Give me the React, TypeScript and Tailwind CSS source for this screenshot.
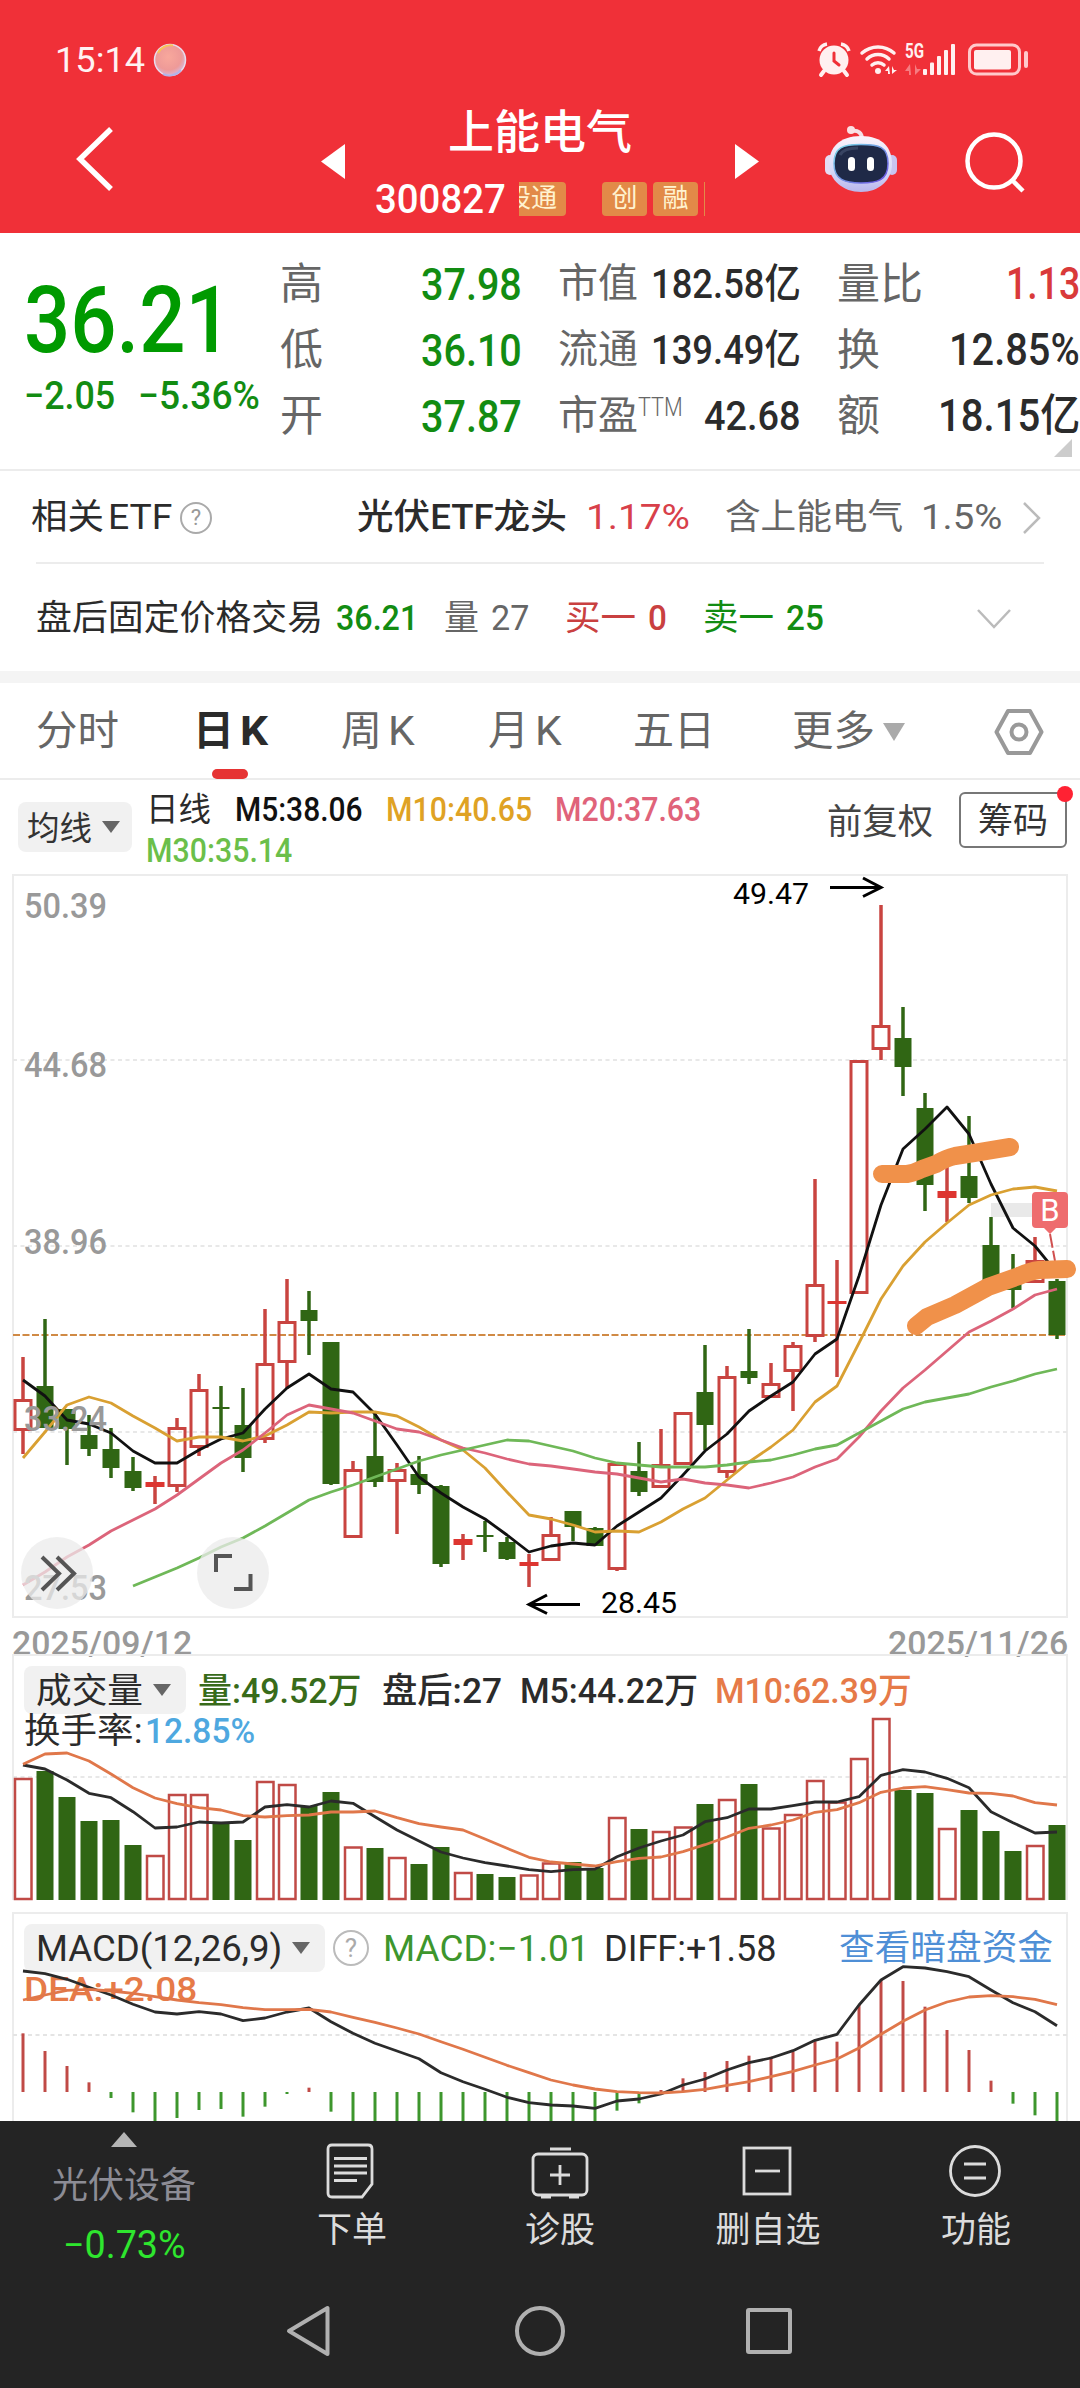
import { useLayoutEffect, useRef, useState } from 'react';
import type { ReactNode } from 'react';
import { clsx } from 'clsx';

const FONT = 'Roboto, "Noto Sans CJK SC", sans-serif';

const STEP = 22;
const X0 = 23;
const cx = (i: number) => X0 + i * STEP;
const toPoints = (values: number[], k = 1, start = 0) =>
    values.map((v, i) => `${cx(i + start)},${(v * k).toFixed(1)}`).join(' ');

// [up, high, bodyTop, bodyBottom, low]
const candles: [number, number, number, number, number][] = [
    [1, 487, 529, 561, 584], [0, 449, 516, 558, 558], [0, 539, 539, 559, 595], [0, 545, 565, 579, 586],
    [0, 558, 579, 598, 608], [0, 587, 601, 618, 621], [1, 606, 612, 617, 634], [1, 548, 557, 617, 622],
    [1, 504, 519, 578, 586], [0, 516, 537, 539, 567], [0, 518, 555, 588, 602], [1, 439, 493, 570, 573],
    [1, 409, 451, 493, 519], [0, 421, 440, 451, 485], [0, 472, 472, 614, 615], [1, 591, 599, 668, 668],
    [0, 543, 586, 612, 617], [1, 593, 599, 612, 664], [0, 586, 604, 615, 624], [0, 615, 616, 694, 697],
    [1, 664, 669, 675, 690], [0, 651, 665, 667, 682], [0, 667, 672, 689, 690], [1, 684, 692, 696, 717],
    [1, 647, 664, 691, 691], [0, 641, 641, 657, 671], [0, 657, 658, 676, 676], [1, 593, 593, 700, 701],
    [0, 572, 601, 622, 626], [1, 559, 594, 618, 618], [1, 542, 542, 595, 595], [0, 475, 522, 555, 580],
    [1, 496, 506, 603, 608], [0, 459, 501, 508, 514], [1, 493, 513, 528, 528], [1, 472, 475, 502, 541],
    [1, 309, 414, 467, 472], [1, 390, 431, 434, 507], [1, 190, 190, 424, 424], [1, 35, 155, 180, 190],
    [0, 137, 168, 197, 226], [0, 223, 238, 315, 341], [1, 297, 321, 328, 352], [0, 246, 306, 328, 333],
    [0, 347, 375, 412, 412], [0, 384, 402, 420, 438], [1, 367, 390, 413, 413], [0, 409, 411, 465, 469],
];

const ma5 = [510, 526, 550, 554, 563, 581, 593, 593, 580, 569, 563, 539, 518, 504, 519, 522, 544, 575, 607, 623, 637, 649, 665, 682, 676, 673, 675, 656, 642, 628, 605, 581, 564, 541, 526, 512, 484, 469, 406, 335, 279, 259, 237, 264, 314, 358, 376, 403];
const ma10 = [588, 562, 535, 527, 533, 546, 558, 571, 567, 567, 571, 566, 555, 542, 543, 542, 542, 546, 557, 570, 580, 598, 622, 645, 649, 655, 662, 661, 662, 652, 639, 628, 610, 592, 577, 560, 532, 516, 473, 429, 396, 372, 353, 335, 325, 319, 317, 321];
const ma20 = [715, 702, 687, 675, 661, 650, 639, 625, 609, 593, 580, 563, 545, 535, 539, 543, 551, 559, 562, 570, 578, 583, 589, 594, 596, 599, 602, 604, 608, 612, 609, 613, 615, 618, 613, 607, 597, 589, 567, 541, 518, 500, 481, 462, 451, 439, 425, 419];
const ma30 = [716, 707, 698, 688, 677, 668, 656, 643, 630, 622, 615, 607, 599, 591, 585, 580, 575, 570, 571, 576, 581, 588, 593, 595, 597, 597, 597, 595, 592, 590, 585, 579, 575, 563, 551, 539, 532, 528, 524, 517, 511, 504, 499];

const volTops = [128, 121, 147, 171, 170, 195, 205, 144, 144, 173, 190, 131, 134, 156, 142, 196.5, 198, 207, 214, 197, 222, 224, 227, 224.5, 212.5, 212, 218, 167, 179, 181, 176.5, 154, 149, 134, 177.5, 164, 130, 151.5, 108, 68, 140, 143, 178, 160, 181, 201, 195, 175];
const volMa5 = [345, 357, 390, 430, 443, 485, 534, 531, 516, 519, 516, 471, 464, 471, 453, 460, 500, 540, 573, 606, 624, 638, 648, 659, 665, 659, 657, 620, 594, 573, 555, 515, 503, 477, 477, 467, 456, 456, 440, 376, 359, 366, 385, 413, 485, 518, 549, 546];
const volMa10 = [343, 312, 309, 333, 372, 413, 444, 461, 473, 480, 497, 501, 497, 495, 486, 486, 483, 503, 521, 531, 540, 567, 595, 622, 636, 642, 648, 635, 625, 621, 605, 584, 561, 535, 525, 510, 487, 479, 458, 427, 414, 410, 419, 429, 430, 438, 458, 465];

const macdBars = [400, 453, 498, 547, 594, 637, 670, 654, 630, 627, 650, 620, 582, 563, 635, 670, 670, 670, 670, 670, 670, 670, 670, 670, 670, 670, 670, 632, 610, 570, 535, 516, 483, 467, 470, 455, 424, 425, 315, 240, 243, 320, 390, 450, 542, 611, 646, 670];
const diff = [213, 221, 238, 262, 285, 313, 336, 342, 335, 342, 362, 354, 336, 324, 365, 400, 430, 453, 476, 518, 545, 568, 592, 608, 615, 618, 625, 603, 597, 582, 555, 537, 510, 488, 474, 452, 421, 403, 315, 240, 200, 204, 215, 230, 270, 308, 335, 377];
const dea = [300, 285, 271, 268, 273, 280, 290, 300, 308, 314, 323, 329, 329, 328, 336, 352, 367, 384, 402, 425, 448, 472, 496, 518, 540, 555, 567, 575, 578, 579, 575, 568, 556, 545, 530, 514, 495, 477, 444, 403, 364, 330, 306, 291, 287, 290, 298, 314];

function Fit({ w, className, children }: { w: number; className?: string; children: ReactNode }) {
    const ref = useRef<HTMLSpanElement>(null);
    const [scale, setScale] = useState(1);

    useLayoutEffect(() => {
        if (ref.current) setScale(w / ref.current.offsetWidth);
    }, [w]);

    return (
        <span className={clsx('inline-block shrink-0 leading-none', className)} style={{ width: w }}>
            <span ref={ref} className="inline-block origin-left whitespace-nowrap" style={{ transform: `scaleX(${scale})` }}>
                {children}
            </span>
        </span>
    );
}

function Caret({ className }: { className?: string }) {
    return (
        <svg viewBox="0 0 18 12" preserveAspectRatio="none" className={clsx('shrink-0', className)}>
            <path d="M0 0h18L9 12z" fill="currentColor" />
        </svg>
    );
}

function Help({ className }: { className?: string }) {
    return (
        <span className={clsx('flex shrink-0 items-center justify-center rounded-full border-2 leading-none', className)}>?</span>
    );
}

function StatusBar() {
    return (
        <div className="flex h-[94px] items-start justify-between pl-[55px] pr-[51px] pt-[42px]">
            <div className="flex h-9 items-center">
                <Fit w={90} className="text-[35px] text-[#fff2f2]">15:14</Fit>
                <svg viewBox="0 0 34 34" className="ml-[8px] h-[34px] w-[34px]">
                    <defs>
                        <radialGradient id="ball" cx=".45" cy=".4" r=".6">
                            <stop offset="0" stopColor="#f8a89c" />
                            <stop offset=".7" stopColor="#ee9a98" />
                            <stop offset="1" stopColor="#d9b6d6" />
                        </radialGradient>
                    </defs>
                    <circle cx="17" cy="17" r="15.5" fill="url(#ball)" stroke="#e8dcec" strokeWidth="1.5" />
                    <path d="M5 10A14 14 0 0 1 20 2.500" fill="none" stroke="#f7c25a" strokeWidth="2" />
                    <path d="M28 27A15 15 0 0 1 10 31" fill="none" stroke="#b3b4e8" strokeWidth="2" />
                </svg>
            </div>
            <svg viewBox="0 0 212 36" className="h-9 w-[212px]" fill="#fff0f0">
                {/* alarm */}
                <circle cx="17" cy="18" r="14.500" />
                <path d="M2 9a10 10 0 0 1 8-7M24 2a10 10 0 0 1 8 7" fill="none" stroke="#fff0f0" strokeWidth="3.500" />
                <path d="M7 29l-3 4M27 29l3 4" stroke="#fff0f0" strokeWidth="4" strokeLinecap="round" />
                <path d="M17 11v8l5 4" fill="none" stroke="#f03038" strokeWidth="3" strokeLinecap="round" />
                {/* wifi */}
                <g fill="none" stroke="#fff0f0" strokeWidth="3.500" strokeLinecap="round">
                    <path d="M45 11a24 24 0 0 1 32 0" />
                    <path d="M50 17a16 16 0 0 1 22 0" />
                    <path d="M55 23a9 9 0 0 1 12 0" />
                </g>
                <circle cx="61" cy="29" r="3" />
                <path d="M72 24l-4 5h3v3h2zM75 24v8l5-4h-3z" />
                <text x="88" y="15.500" fontSize="20" fontWeight="700" textLength="19" lengthAdjust="spacingAndGlyphs">5G</text>
                <path d="M93 22l-5 7h4v4h2zM98 22v11l6-6h-4z" opacity=".4" />
                <rect x="106" y="27" width="4" height="6" rx="1" />
                <rect x="113" y="20.500" width="4" height="12.500" rx="1" />
                <rect x="120" y="14" width="4" height="19" rx="1" />
                <rect x="127" y="8" width="4" height="25" rx="1" />
                <rect x="134" y="2" width="4" height="31" rx="1" />
                {/* battery */}
                <rect x="152.500" y="3" width="50" height="29" rx="7" fill="none" stroke="#ffc9cb" strokeWidth="3" />
                <rect x="157" y="8" width="37" height="19.500" rx="2" />
                <rect x="207" y="9" width="4" height="17" rx="2" fill="#ffc9cb" />
            </svg>
        </div>
    );
}

function Robot() {
    return (
        <svg viewBox="0 0 74 68" className="h-[68px] w-[74px]">
            <defs>
                <linearGradient id="head" x1="0" y1="0" x2="0" y2="1">
                    <stop offset="0" stopColor="#fbf3fb" />
                    <stop offset=".6" stopColor="#d9dbf8" />
                    <stop offset="1" stopColor="#b9b6ec" />
                </linearGradient>
                <linearGradient id="rim" x1="0" y1="0" x2="1" y2="1">
                    <stop offset="0" stopColor="#7ce0ea" />
                    <stop offset="1" stopColor="#6a4be0" />
                </linearGradient>
            </defs>
            <path d="M28 6c6-1 10 2 10 8" fill="none" stroke="#f5dfe6" strokeWidth="4" />
            <circle cx="27" cy="5" r="4" fill="#fbe0e4" />
            <rect x="1" y="30" width="10" height="20" rx="5" fill="#e4dcf4" />
            <rect x="63" y="30" width="10" height="20" rx="5" fill="#c9c4f0" />
            <path d="M37 11c22 0 31 12 31 28S55 67 37 67 5 55 5 39 15 11 37 11z" fill="url(#head)" />
            <path d="M37 19.500c18 0 27 2 27 19S53 58 37 58 10 55 10 38.500s9-19 27-19z" fill="#1f2947" stroke="url(#rim)" strokeWidth="1.500" />
            <path d="M16 30c3-6 11-7 18-7" fill="none" stroke="#4a5677" strokeWidth="3" opacity=".6" />
            <rect x="24" y="32" width="7" height="14" rx="3.500" fill="#fff" />
            <rect x="43" y="32" width="7" height="14" rx="3.500" fill="#fff" />
        </svg>
    );
}

function Header() {
    return (
        <header className="h-[233px] bg-[#f03038] text-white">
            <StatusBar />
            <div className="flex h-[139px] items-start">
                <svg viewBox="0 0 40 70" className="ml-[75px] mt-[30px] h-[70px] w-10">
                    <path d="M36 5L5 35l31 30" fill="none" stroke="#fff" strokeWidth="5.500" />
                </svg>
                <svg viewBox="0 0 24 35" className="ml-[206px] mt-[50px] h-[35px] w-6">
                    <path d="M24 0v35L0 17.500z" fill="#fff" />
                </svg>
                <div className="w-[390px]">
                    <div className="mt-[15px] text-center text-[46px] font-medium leading-none">上能电气</div>
                    <div className="ml-[30px] mt-[26px] flex h-[36px] w-[330px] items-center">
                        <Fit w={131} className="text-[41px] font-medium">300827</Fit>
                        <div className="ml-[13px] flex h-[34px] w-[187px] overflow-hidden text-[26px] leading-[33px] text-[#fff3d0]">
                            <div className="flex w-[47px] shrink-0 justify-end rounded-r bg-[#e28a48] pr-[9px]">
                                <span className="whitespace-nowrap">股通</span>
                            </div>
                            <div className="ml-9 w-[45px] shrink-0 rounded bg-[#e28a48] text-center">创</div>
                            <div className="ml-[6px] w-[45px] shrink-0 rounded bg-[#e28a48] text-center">融</div>
                            <div className="ml-[6px] w-[1px] shrink-0 bg-[#e28a48]" />
                        </div>
                    </div>
                </div>
                <svg viewBox="0 0 24 35" className="mt-[50px] h-[35px] w-6">
                    <path d="M0 0v35l24-17.500z" fill="#fff" />
                </svg>
                <div className="ml-[65px] mt-[31px]"><Robot /></div>
                <svg viewBox="0 0 64 64" className="ml-[64px] mt-[36px] h-16 w-16">
                    <circle cx="32" cy="31" r="26.500" fill="none" stroke="#fff" strokeWidth="4.500" />
                    <path d="M50 50l11 11" stroke="#fff" strokeWidth="4.500" />
                </svg>
            </div>
        </header>
    );
}

const quoteRows = [
    { a: '高', av: '37.98', b: '市值', bv: '182.58亿', bw: 150, c: '量比', cv: '1.13', cw: 74, up: true },
    { a: '低', av: '36.10', b: '流通', bv: '139.49亿', bw: 150, c: '换', cv: '12.85%', cw: 131, up: false },
    { a: '开', av: '37.87', b: '市盈', bv: '42.68', bw: 97, c: '额', cv: '18.15亿', cw: 142, up: false },
];

function Quote() {
    return (
        <section className="relative flex h-[238px] border-b-2 border-[#ececec]">
            <div className="w-[280px] shrink-0 pl-[24px] text-[#009a00]">
                <Fit w={208} className="mt-[42px] text-[92px] font-medium">36.21</Fit>
                <div className="mt-[10px] flex gap-[23px] text-[39px] font-medium text-[#128c12]">
                    <Fit w={91}>−2.05</Fit>
                    <Fit w={122}>−5.36%</Fit>
                </div>
            </div>
            <div className="flex-1 pt-[18px]">
                {quoteRows.map((r) => (
                    <div key={r.a} className="flex h-[66px] items-center leading-none">
                        <span className="w-[141px] text-[43px] text-[#666]">{r.a}</span>
                        <Fit w={101} className="text-[45px] font-medium text-[#128c12]">{r.av}</Fit>
                        <div className="ml-[36px] flex w-[243px] items-center justify-between">
                            <span className="flex text-[40px] text-[#666]">
                                {r.b}
                                {r.b === '市盈' && <Fit w={45} className="-mt-[1px] text-[25px] font-light">TTM</Fit>}
                            </span>
                            <Fit w={r.bw} className="text-[41px] font-medium text-[#2b2b2b]">{r.bv}</Fit>
                        </div>
                        <div className="ml-[36px] flex w-[243px] items-center justify-between">
                            <span className="text-[43px] text-[#666]">{r.c}</span>
                            <Fit w={r.cw} className={clsx('text-[44px] font-medium', r.up ? 'text-[#d93a3a]' : 'text-[#2b2b2b]')}>{r.cv}</Fit>
                        </div>
                    </div>
                ))}
            </div>
            <svg viewBox="0 0 18 18" className="absolute bottom-[12px] right-[8px] h-[18px] w-[18px]">
                <path d="M18 0v18H0z" fill="#ccc" />
            </svg>
        </section>
    );
}

function InfoRows() {
    return (
        <section className="text-[35px] leading-none text-[#2b2b2b]">
            <div className="flex h-[91px] items-center pl-[31px] pt-[2px]">
                <Fit w={73}>相关</Fit>
                <Fit w={64} className="ml-[4px]">ETF</Fit>
                <Help className="ml-[8px] h-8 w-8 border-[#aaa] text-[22px] text-[#999]" />
                <Fit w={210} className="ml-[145px] font-medium">光伏ETF龙头</Fit>
                <Fit w={104} className="ml-[19px] text-[#d8404a]">1.17%</Fit>
                <Fit w={178} className="ml-[35px] text-[#666]">含上能电气</Fit>
                <Fit w={81} className="ml-[18px] text-[#666]">1.5%</Fit>
                <svg viewBox="0 0 20 34" className="ml-[20px] h-[34px] w-5">
                    <path d="M2 2l15 15L2 32" fill="none" stroke="#bbb" strokeWidth="2.500" />
                </svg>
            </div>
            <div className="mx-9 h-[2px] bg-[#ececec]" />
            <div className="flex h-[107px] items-center pl-[36px] pt-[2px]">
                <Fit w={287}>盘后固定价格交易</Fit>
                <Fit w={82} className="ml-[13px] font-medium text-[#128c12]">36.21</Fit>
                <Fit w={35} className="ml-[26px] text-[#666]">量</Fit>
                <Fit w={38} className="ml-[12px] text-[#666]">27</Fit>
                <Fit w={71} className="ml-[36px] text-[#c94040]">买一</Fit>
                <Fit w={19} className="ml-[12px] font-medium text-[#c94040]">0</Fit>
                <Fit w={71} className="ml-[36px] text-[#128c12]">卖一</Fit>
                <Fit w={38} className="ml-[12px] font-medium text-[#128c12]">25</Fit>
                <svg viewBox="0 0 36 22" className="ml-[152px] h-[22px] w-9">
                    <path d="M2 2l16 17L34 2" fill="none" stroke="#bbb" strokeWidth="2.500" />
                </svg>
            </div>
            <div className="h-3 bg-[#f4f4f4]" />
        </section>
    );
}

function Tabs() {
    return (
        <nav className="flex h-[97px] items-center border-b-2 border-[#ececec] pl-[36px] pt-[2px] text-[41px] leading-none text-[#666]">
            <Fit w={83}>分时</Fit>
            <div className="relative ml-[74px] flex gap-[6px] font-bold text-[#2b2b2b]">
                <Fit w={41}>日</Fit>
                <Fit w={28}>K</Fit>
                <div className="absolute -bottom-[27px] left-[19px] h-[10px] w-9 rounded-[5px] bg-[#e63333]" />
            </div>
            <div className="ml-[73px] flex gap-[6px]">
                <Fit w={41}>周</Fit>
                <Fit w={27}>K</Fit>
            </div>
            <div className="ml-[73px] flex gap-[6px]">
                <Fit w={41}>月</Fit>
                <Fit w={27}>K</Fit>
            </div>
            <Fit w={82} className="ml-[71px]">五日</Fit>
            <Fit w={83} className="ml-[77px]">更多</Fit>
            <Caret className="ml-[8px] h-[18px] w-[22px] text-[#aaa]" />
            <svg viewBox="0 0 50 48" className="ml-[89px] h-12 w-[50px]" fill="none" stroke="#999" strokeWidth="4" strokeLinejoin="round">
                <path d="M14 3h22l11.500 21L36 45H14L2.500 24z" />
                <circle cx="25" cy="24" r="7.500" />
            </svg>
        </nav>
    );
}

function MaLegend() {
    return (
        <div className="flex h-[90px] items-start pl-[18px] leading-none">
            <div className="mt-[22px] flex h-[50px] w-[114px] items-center rounded-lg bg-[#f1f1f1] pl-[9px] text-[33px] text-[#333]">
                <Fit w={65} className="mt-[2px]">均线</Fit>
                <Caret className="ml-[10px] h-[12px] w-[18px] text-[#666]" />
            </div>
            <div className="ml-[14px] mt-[13px] w-[670px] text-[33px]">
                <div className="flex h-[33px] items-center font-medium">
                    <Fit w={65} className="font-normal text-[#2b2b2b]">日线</Fit>
                    <Fit w={128} className="ml-[24px] text-[#111]">M5:38.06</Fit>
                    <Fit w={146} className="ml-[23px] text-[#dfa224]">M10:40.65</Fit>
                    <Fit w={146} className="ml-[23px] text-[#e0637a]">M20:37.63</Fit>
                </div>
                <div className="mt-[8px] flex h-[33px] items-center">
                    <Fit w={146} className="font-medium text-[#6bbf4a]">M30:35.14</Fit>
                </div>
            </div>
            <Fit w={106} className="ml-[11px] mt-[25px] text-[35px] text-[#444]">前复权</Fit>
            <div className="relative ml-[26px] mt-[12px] flex h-[56px] w-[108px] items-center justify-center rounded-md border-2 border-[#777] text-[35px] text-[#333]">
                <Fit w={70} className="mt-[2px]">筹码</Fit>
                <div className="absolute -right-[8px] -top-[8px] h-4 w-4 rounded-full bg-[#ff2233]" />
            </div>
        </div>
    );
}

const axis: [string, number][] = [['50.39', 48], ['44.68', 207], ['38.96', 384], ['33.24', 561], ['27.53', 730]];

function PriceChart() {
    return (
        <svg viewBox="0 0 1080 750" className="block h-[750px] w-[1080px]">
            <rect x="13" y="5" width="1054" height="742" fill="none" stroke="#ececec" strokeWidth="2" />
            {[190, 376, 562].map((y) => (
                <line key={y} x1="13" x2="1067" y1={y} y2={y} stroke="#e8e8e8" strokeWidth="2" strokeDasharray="4 3.500" />
            ))}
            <line x1="13" x2="1067" y1="465" y2="465" stroke="#d08a45" strokeWidth="2" strokeDasharray="7 2.500" />
            <rect x="991" y="333" width="42" height="14" fill="#e9e9e9" />

            {candles.map(([up, high, top, bottom, low], i) => {
                const x = cx(i);
                const color = up ? '#c94440' : '#306614';
                const thin = bottom - top < 8;
                return (
                    <g key={i}>
                        {high < top && <line x1={x} x2={x} y1={high} y2={top} stroke={color} strokeWidth="3.500" />}
                        {low > bottom && <line x1={x} x2={x} y1={bottom} y2={low} stroke={color} strokeWidth="3.500" />}
                        {up && !thin ? (
                            <rect x={x - 8} y={top + 1.5} width="16" height={bottom - top - 3} fill="none" stroke={color} strokeWidth="3" />
                        ) : (
                            <rect x={x - (up ? 9.5 : 8.5)} y={top} width={up ? 19 : 17} height={bottom - top} fill={up ? '#dd3530' : color} />
                        )}
                    </g>
                );
            })}

            <g fill="none" strokeWidth="2.800" strokeLinejoin="round">
                <polyline points={toPoints(ma5)} stroke="#111" />
                <polyline points={toPoints(ma10)} stroke="#d9a032" />
                <polyline points={toPoints(ma20)} stroke="#dc647a" />
                <polyline points={toPoints(ma30, 1, 5)} stroke="#6fb858" />
            </g>

            <g fill="#999" fontSize="35" fontWeight="500">
                {axis.map(([label, y]) => (
                    <text key={label} x="24" y={y} textLength="83" lengthAdjust="spacingAndGlyphs">{label}</text>
                ))}
            </g>

            {/* high / low markers */}
            <g fill="none" stroke="#000" strokeWidth="3">
                <path d="M830 17.500h50M863 8l18 9.500-18 9" />
                <path d="M580 734.500h-50M547 725l-18 9.500 18 9" />
            </g>
            <g fontSize="30">
                <text x="733" y="34" textLength="76" lengthAdjust="spacingAndGlyphs">49.47</text>
                <text x="601" y="743" textLength="76" lengthAdjust="spacingAndGlyphs">28.45</text>
            </g>

            {/* buy point */}
            <path d="M1050 364l5 27" stroke="#d05050" strokeWidth="2" strokeDasharray="14 3" />
            <path d="M1036 322h28a4 4 0 0 1 4 4v28a4 4 0 0 1-4 4h-8l-6 6-6-6h-8a4 4 0 0 1-4-4v-28a4 4 0 0 1 4-4z" fill="#ee6c6e" />
            <text x="1050" y="351" textAnchor="middle" fontSize="31" fill="#fff">B</text>

            <g fill="none" stroke="#f0914a" strokeWidth="18" strokeLinecap="round" strokeLinejoin="round">
                <path d="M882 304L907 304Q914 303 922 299L936 294Q946 288 955 286L974 283L998 279L1010 277" />
                <path d="M916 456L927 447L941 441L955 435L988 417L1019 406Q1030 401 1039 400L1067 399" />
            </g>

            <circle cx="57" cy="703" r="36" fill="#ebebeb" fillOpacity=".75" />
            <circle cx="233" cy="703" r="36" fill="#ebebeb" fillOpacity=".75" />
            <g fill="none" stroke="#555" strokeWidth="4">
                <path d="M42 687l17 16.500L42 720M57 687l17 16.500L57 720" />
                <path d="M216 702v-16h16M234 719h16.500v-15" />
            </g>
        </svg>
    );
}

function DateAxis() {
    return (
        <div className="flex h-[30px] items-start justify-between pl-[12px] pr-[12px] text-[34px] font-medium text-[#999]">
            <Fit w={180} className="mt-[6px]">2025/09/12</Fit>
            <Fit w={180} className="mt-[6px]">2025/11/26</Fit>
        </div>
    );
}

function VolumeChart() {
    return (
        <section className="relative h-[260px]">
            <svg viewBox="0 0 1080 260" className="block h-[260px] w-[1080px]">
                <path d="M13 250V5h1054v245" fill="none" stroke="#ececec" strokeWidth="2" />
                <line x1="13" x2="1067" y1="127" y2="127" stroke="#e8e8e8" strokeWidth="2" strokeDasharray="4 3.500" />
                {volTops.map((top, i) =>
                    candles[i][0] ? (
                        <rect key={i} x={cx(i) - 8} y={top + 1} width="16.500" height={248 - top} fill="#fff" stroke="#c04a46" strokeWidth="2.500" />
                    ) : (
                        <rect key={i} x={cx(i) - 8.5} y={top} width="17" height={250 - top} fill="#306614" />
                    )
                )}
                <g fill="none" strokeWidth="2.800" strokeLinejoin="round">
                    <polyline points={toPoints(volMa5, 1 / 3)} stroke="#2b2b2b" />
                    <polyline points={toPoints(volMa10, 1 / 3)} stroke="#e0774a" />
                </g>
            </svg>
            <div className="absolute left-6 top-4 text-[35px] leading-none text-[#2b2b2b]">
                <div className="flex h-12 items-center">
                    <div className="flex h-12 w-[162px] items-center rounded-lg bg-[#f1f1f1] pl-[12px]">
                        <Fit w={107} className="mt-[2px]">成交量</Fit>
                        <Caret className="ml-[10px] h-[12px] w-[18px] text-[#666]" />
                    </div>
                    <Fit w={164} className="ml-[12px] mt-[2px] font-medium text-[#386b1a]">量:49.52万</Fit>
                    <Fit w={120} className="ml-[20px] mt-[2px] font-medium">盘后:27</Fit>
                    <Fit w={178} className="ml-[18px] mt-[2px] font-medium">M5:44.22万</Fit>
                    <Fit w={197} className="ml-[17px] mt-[2px] font-medium text-[#e67a48]">M10:62.39万</Fit>
                </div>
                <div className="flex">
                    <Fit w={118}>换手率:</Fit>
                    <Fit w={110} className="ml-[3px] font-medium text-[#4ea8e0]">12.85%</Fit>
                </div>
            </div>
        </section>
    );
}

function MacdChart() {
    return (
        <section className="relative h-[211px]">
            <svg viewBox="0 10 1080 211" className="block h-[211px] w-[1080px]">
                <path d="M13 225V13h1054v212" fill="none" stroke="#ececec" strokeWidth="2" />
                <line x1="13" x2="1067" y1="135" y2="135" stroke="#e4e4e4" strokeWidth="2" strokeDasharray="4 3.500" />
                {macdBars.map((v, i) => (
                    <line key={i} x1={cx(i)} x2={cx(i)} y1="192" y2={v / 3} stroke={v < 576 ? '#c04a46' : '#3d962d'} strokeWidth="3" />
                ))}
            </svg>
            <div className="absolute left-6 right-0 top-[14px] text-[35px] leading-none text-[#2b2b2b]">
                <div className="flex h-12 items-center">
                    <div className="flex h-12 w-[301px] items-center rounded-lg bg-[#f1f1f1] pl-[12px]">
                        <Fit w={246} className="mt-[2px] text-[36px]">MACD(12,26,9)</Fit>
                        <Caret className="ml-[10px] h-[12px] w-[18px] text-[#666]" />
                    </div>
                    <Help className="ml-[8px] h-9 w-9 border-[#bbb] text-[26px] text-[#aaa]" />
                    <Fit w={207} className="ml-[14px] mt-[2px] text-[36px] text-[#3d962d]">MACD:−1.01</Fit>
                    <Fit w={173} className="ml-[14px] mt-[2px] text-[36px]">DIFF:+1.58</Fit>
                    <Fit w={214} className="ml-[62px] text-[#4f8fd6]">查看暗盘资金</Fit>
                </div>
                <Fit w={173} className="-mt-[1px] text-[34px] font-medium text-[#e67a48]">DEA:+2.08</Fit>
            </div>
            {/* lines run over the legend text */}
            <svg viewBox="0 10 1080 211" className="absolute inset-0 h-[211px] w-[1080px]" fill="none" strokeWidth="2.800" strokeLinejoin="round">
                <polyline points={toPoints(diff, 1 / 3)} stroke="#2b2b2b" />
                <polyline points={toPoints(dea, 1 / 3)} stroke="#e0774a" />
            </svg>
        </section>
    );
}

const actions = [
    {
        label: '下单',
        icon: (
            <>
                <path d="M9 3h36q4 0 4 4v35L39 55H9q-4 0-4-4V7q0-4 4-4z" />
                <path d="M11 16.500h33M11 24h33M11 31h33M11 38.500h23" />
            </>
        ),
    },
    {
        label: '诊股',
        icon: (
            <>
                <rect x="2" y="12" width="54" height="41" rx="5" />
                <path d="M19 7h21M29 23v20M19 33h20M10 55h10M38 55h10" />
            </>
        ),
    },
    {
        label: '删自选',
        icon: (
            <>
                <rect x="5" y="6" width="46" height="46" />
                <path d="M16 29h25" />
            </>
        ),
    },
    {
        label: '功能',
        icon: (
            <>
                <circle cx="28" cy="29" r="24.500" />
                <path d="M17 22h22M17 36h22" />
            </>
        ),
    },
];

function Footer() {
    return (
        <footer className="h-[267px] bg-[#242424] leading-none">
            <div className="flex h-[146px]">
                <div className="flex w-[248px] flex-col items-center pt-[11px]">
                    <Caret className="h-[15px] w-[26px] rotate-180 text-[#b5b5b5]" />
                    <span className="mt-[21px] text-[36px] text-[#8c8c95]">光伏设备</span>
                    <Fit w={123} className="mt-[22px] text-[38px] text-[#2ee62e]">−0.73%</Fit>
                </div>
                {actions.map((a) => (
                    <div key={a.label} className="flex w-[208px] flex-col items-center pt-[21px] text-[35px] text-[#dcdcdc]">
                        <svg viewBox="0 0 58 58" className="h-[58px] w-[58px]" fill="none" stroke="#dcdcdc" strokeWidth="2.800">
                            {a.icon}
                        </svg>
                        <span className="mt-[13px]">{a.label}</span>
                    </div>
                ))}
            </div>
            <div className="flex h-[121px] items-start pt-[38px]">
                <svg viewBox="0 0 800 52" className="ml-[140px] h-[52px] w-[800px]" fill="none" stroke="#b0b0b0" strokeWidth="4" strokeLinejoin="round">
                    <path d="M187.500 3v46L149 26z" />
                    <circle cx="400" cy="26" r="23" />
                    <rect x="608" y="5" width="42" height="42" rx="1" />
                </svg>
            </div>
        </footer>
    );
}

export default function App() {
    return (
        <div className="w-[1080px] overflow-hidden bg-white" style={{ fontFamily: FONT }}>
            <Header />
            <Quote />
            <InfoRows />
            <Tabs />
            <MaLegend />
            <PriceChart />
            <DateAxis />
            <VolumeChart />
            <MacdChart />
            <Footer />
        </div>
    );
}
